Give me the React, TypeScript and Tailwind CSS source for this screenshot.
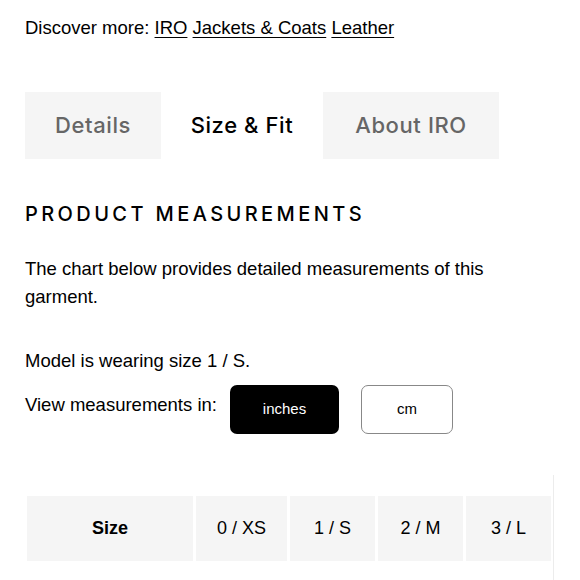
const SIZES = ['0 / XS', '1 / S', '2 / M', '3 / L'];
const CELL_W = ['w-[91px]', 'w-[85px]', 'w-[85px]', 'w-[85px]'];

export default function App() {
  return (
    <div className="h-[580px] w-[580px] overflow-hidden bg-white pl-[25px] text-black" style={{ fontFamily: '"Liberation Sans", Arial, sans-serif' }}>
      <p className="pt-[17px] text-[18.5px] leading-[22px]">
        Discover more:{' '}
        <a className="underline underline-offset-[3px]">IRO</a>{' '}
        <a className="underline underline-offset-[3px]">Jackets &amp; Coats</a>{' '}
        <a className="underline underline-offset-[3px]">Leather</a>
      </p>

      <div className="mt-[53px] flex h-[67px] w-[474px] text-[22px] font-medium tracking-[0.6px] font-['Inter',sans-serif]">
        <div className="flex w-[136px] items-center justify-center bg-[#f5f5f5] text-[#666]">Details</div>
        <div className="flex w-[162px] items-center justify-center bg-white text-black">Size &amp; Fit</div>
        <div className="flex w-[176px] items-center justify-center bg-[#f5f5f5] text-[#666]">About IRO</div>
      </div>

      <h2 className="mt-[43px] text-[20px] font-medium leading-[24px] tracking-[3.4px] font-['Inter',sans-serif]">PRODUCT MEASUREMENTS</h2>

      <p className="mt-[29px] w-[500px] text-[18.5px] leading-[28px]">
        The chart below provides detailed measurements of this garment.
      </p>

      <p className="mt-[38px] text-[18.5px] leading-[24px]">Model is wearing size 1 / S.</p>

      <div className="mt-[12px] flex items-start">
        <span className="mt-[8px] w-[205px] text-[18.5px] leading-[24px]">View measurements in:</span>
        <button className="h-[49px] w-[109px] rounded-[7px] bg-black text-[15px] text-white">inches</button>
        <button className="ml-[22px] h-[49px] w-[92px] rounded-[7px] border border-[#888] bg-white text-[15px] text-black">cm</button>
      </div>

      <div className="mt-[62px] flex">
        <div className="flex gap-[3px] pl-[2px]">
          <div className="flex h-[65px] w-[166px] items-center justify-center bg-[#f5f5f5] text-[18px] font-bold">Size</div>
          {SIZES.map((s, i) => (
            <div key={s} className={`flex h-[65px] ${CELL_W[i]} items-center justify-center bg-[#f5f5f5] text-[18px]`}>{s}</div>
          ))}
        </div>
        <div className="-mt-[21px] ml-[2px] h-[130px] w-px bg-[#ececec]" />
      </div>
    </div>
  );
}
